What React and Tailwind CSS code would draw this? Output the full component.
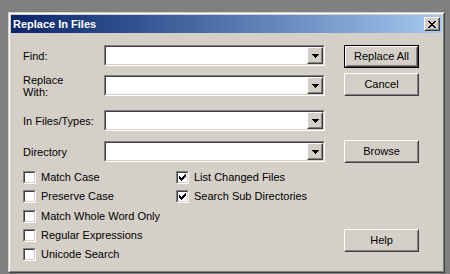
import React from 'react';

const Raised = ({ children, className = '', outer = '' }) => (
  <div className={`border border-t-white border-l-white border-r-[#404040] border-b-[#404040] ${className}`}>
    <div className={`w-full h-full border border-t-[#d4d0c8] border-l-[#d4d0c8] border-r-[#808080] border-b-[#808080] bg-[#d4d0c8] flex items-center justify-center ${outer}`}>
      {children}
    </div>
  </div>
);

const Sunken = ({ children, className = '' }) => (
  <div className={`border border-t-[#808080] border-l-[#808080] border-r-white border-b-white ${className}`}>
    <div className="w-full h-full border border-t-[#404040] border-l-[#404040] border-r-[#d4d0c8] border-b-[#d4d0c8] bg-white flex justify-end">
      {children}
    </div>
  </div>
);

const Combo = () => (
  <Sunken className="w-[221px] h-[21px]">
    <Raised className="w-[16px] h-full">
      <svg width="7" height="4" viewBox="0 0 7 4" shapeRendering="crispEdges">
        <path d="M0 0h7v1H0zM1 1h5v1H1zM2 2h3v1H2zM3 3h1v1H3z" fill="#000" />
      </svg>
    </Raised>
  </Sunken>
);

const Check = ({ checked, label }) => (
  <div className="flex items-center h-[13px]">
    <Sunken className="w-[13px] h-[13px] shrink-0">
      {checked && (
        <svg width="9" height="9" viewBox="0 0 9 9" shapeRendering="crispEdges" className="m-auto">
          <path
            d="M7 1h1v1H7zM6 2h2v1H6zM1 3h1v1H1zM5 3h3v1H5zM1 4h2v1H1zM4 4h3v1H4zM1 5h5v1H1zM2 6h3v1H2zM3 7h1v1H3z"
            fill="#000"
          />
        </svg>
      )}
    </Sunken>
    <span className="ml-[5px] leading-[13px] whitespace-nowrap">{label}</span>
  </div>
);

const Button = ({ label, isDefault, className = '' }) =>
  isDefault ? (
    <div className={`w-[75px] h-[23px] border border-black ${className}`}>
      <Raised className="w-full h-full">{label}</Raised>
    </div>
  ) : (
    <Raised className={`w-[75px] h-[23px] ${className}`}>{label}</Raised>
  );

const Row = ({ label, className = '' }) => (
  <div className={`flex items-center h-[21px] ${className}`}>
    <div className="w-[81px] leading-[12px]">{label}</div>
    <Combo />
  </div>
);

export default function App() {
  return (
    <div
      className="w-[450px] h-[274px] bg-[#808080] pt-[12px] pl-[8px] overflow-hidden text-[11px] text-black"
      style={{ fontFamily: '"Liberation Sans", Arial, sans-serif' }}
    >
      <div className="w-[437px] h-[261px] border border-t-[#d4d0c8] border-l-[#d4d0c8] border-r-[#404040] border-b-[#404040]">
        <div className="h-full border border-t-white border-l-white border-r-[#808080] border-b-[#808080] bg-[#d4d0c8] p-[1px] flex flex-col">
          <div className="h-[18px] bg-gradient-to-r from-[#0a246a] to-[#a6caf0] flex items-center justify-between pl-[2px] pr-[2px]">
            <span className="text-white font-bold text-[11px] leading-[13px]">Replace In Files</span>
            <Raised className="w-[16px] h-[14px]">
              <svg width="8" height="7" viewBox="0 0 8 7" shapeRendering="crispEdges">
                <path
                  d="M0 0h2v1H0zM6 0h2v1H6zM1 1h2v1H1zM5 1h2v1H5zM2 2h4v1H2zM3 3h2v1H3zM2 4h4v1H2zM1 5h2v1H1zM5 5h2v1H5zM0 6h2v1H0zM6 6h2v1H6z"
                  fill="#000"
                />
              </svg>
            </Raised>
          </div>

          <div className="flex pl-[12px] pt-[12px]">
            <div className="w-[302px] flex flex-col">
              <Row label="Find:" />
              <Row label={<>Replace<br />With:</>} className="mt-[9px]" />
              <Row label="In Files/Types:" className="mt-[14px]" />
              <Row label="Directory" className="mt-[10px]" />

              <div className="grid grid-cols-[153px_auto] gap-y-[6.25px] mt-[9px]">
                <Check label="Match Case" />
                <Check checked label="List Changed Files" />
                <Check label="Preserve Case" />
                <Check checked label="Search Sub Directories" />
                <Check label="Match Whole Word Only" />
                <div />
                <Check label="Regular Expressions" />
                <div />
                <Check label="Unicode Search" />
              </div>
            </div>

            <div className="ml-[19px] flex flex-col">
              <Button isDefault label="Replace All" />
              <Button label="Cancel" className="mt-[5px]" />
              <Button label="Browse" className="mt-[44px]" />
              <Button label="Help" className="mt-[66px]" />
            </div>
          </div>
        </div>
      </div>
    </div>
  );
}
